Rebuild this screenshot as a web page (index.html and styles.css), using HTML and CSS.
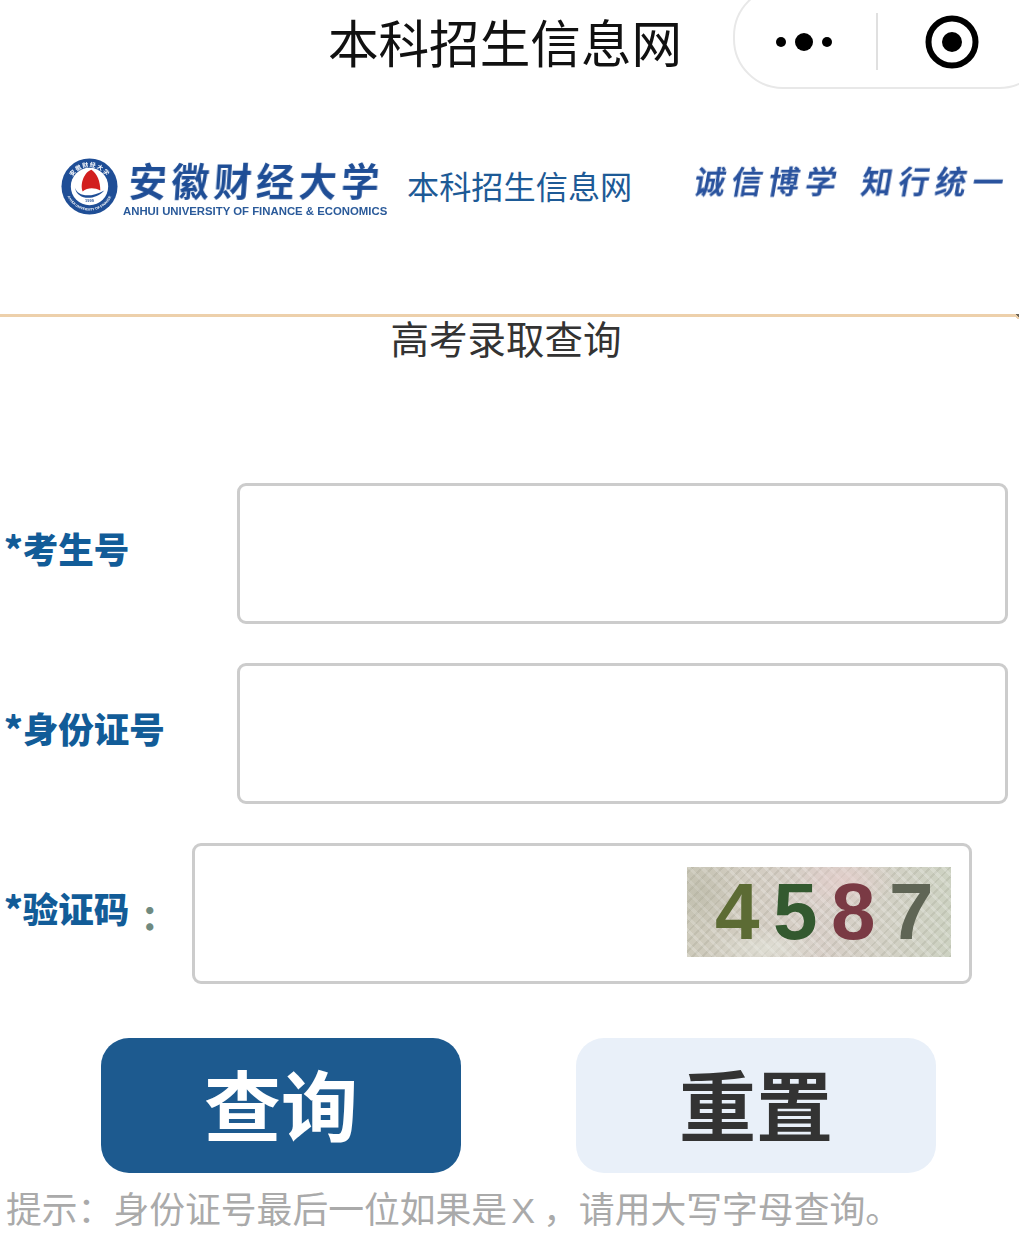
FILE: index.html
```html
<!DOCTYPE html>
<html lang="zh">
<head>
<meta charset="utf-8">
<title>本科招生信息网</title>
<link rel="stylesheet" href="styles.css">
</head>
<body>
<header class="nav">
  <h1 class="nav-title">本科招生信息网</h1>
  <div class="capsule">
    <div class="capsule-cell">
      <svg class="dots" width="62" height="20" viewBox="0 0 62 20"><circle cx="6" cy="10" r="5"/><circle cx="29" cy="10" r="9"/><circle cx="52" cy="10" r="5"/></svg>
    </div>
    <span class="capsule-sep"></span>
    <div class="capsule-cell">
      <svg width="54" height="54" viewBox="0 0 54 54"><circle cx="27" cy="27" r="23.5" fill="none" stroke="#000" stroke-width="6"/><circle cx="27" cy="27" r="10"/></svg>
    </div>
  </div>
</header>
<section class="banner">
  <svg class="seal" width="57" height="57" viewBox="0 0 58 58">
    <defs><path id="sealTop" d="M9 29a20 20 0 0 1 40 0"/><path id="sealBottom" d="M4.500 29a24.500 24.500 0 0 0 49 0"/></defs>
    <circle cx="29" cy="29" r="28.500" fill="#1f4e96"/>
    <circle cx="29" cy="29" r="19" fill="#fff"/>
    <path d="M31 12c6 4 9 12 9 21-6-3-13-3-18 1-3-8 2-20 9-22z" fill="#d21f1f"/>
    <path d="M14 30c3 9 15 11 30 3-9 10-27 11-30-3z" fill="#1f4e96"/>
    <text class="seal-year" x="29" y="45" text-anchor="middle">1999</text>
    <text class="seal-top"><textPath href="#sealTop" startOffset="50%" text-anchor="middle">安徽财经大学</textPath></text>
    <text class="seal-bottom"><textPath href="#sealBottom" startOffset="50%" text-anchor="middle">ANHUI UNIVERSITY OF FINANCE</textPath></text>
  </svg>
  <div class="brand">
    <div class="brand-cn">安徽财经大学</div>
    <div class="brand-en">ANHUI UNIVERSITY OF FINANCE &amp; ECONOMICS</div>
  </div>
  <div class="brand-site">本科招生信息网</div>
  <div class="motto"><span>诚信博学</span><span>知行统一</span></div>
</section>
<div class="rule"></div>
<h2 class="page-title">高考录取查询</h2>
<form class="form">
  <div class="row">
    <label class="label">*考生号</label>
    <div class="field"></div>
  </div>
  <div class="row">
    <label class="label">*身份证号</label>
    <div class="field"></div>
  </div>
  <div class="row">
    <label class="label label-captcha">*验证码<span class="colon">：</span></label>
    <div class="field field-captcha">
      <div class="captcha"><span class="d4">4</span><span class="d5">5</span><span class="d8">8</span><span class="d7">7</span></div>
    </div>
  </div>
  <div class="buttons">
    <div class="btn btn-primary">查询</div>
    <div class="btn btn-light">重置</div>
  </div>
</form>
<p class="hint">提示：身份证号最后一位如果是<span class="hint-x">X</span> ，请用大写字母查询。</p>
</body>
</html>
```
FILE: styles.css
```css
* { box-sizing: border-box; }
html, body { margin: 0; padding: 0; background: #fff; }
body { width: 1019px; height: 1259px; overflow: hidden; position: relative; font-family: "Noto Sans CJK SC", "Liberation Sans", sans-serif; }

.nav { height: 88px; padding-bottom: 6px; display: flex; justify-content: center; align-items: center; }
.nav-title { margin: 0 0 0 -9px; font-size: 50.600px; font-weight: 400; line-height: 82px; color: #111; }
.capsule { position: absolute; left: 733px; top: -14px; width: 316px; height: 103px; border: 2px solid #e8e8e8; border-radius: 50px; display: flex; align-items: center; padding-top: 8px; }
.capsule-cell { width: 141px; display: flex; justify-content: center; align-items: center; }
.capsule-cell:last-child { width: 147px; }
.dots { fill: #000; }
.capsule-sep { width: 2px; height: 57px; background: #e0e0e0; }

.banner { height: 226px; padding: 68px 0 0 61px; display: flex; align-items: flex-start; }
.seal { margin-top: 2px; flex: none; filter: blur(.3px); }
.seal-year { font: 700 4px "Liberation Sans", sans-serif; fill: #1f4e96; }
.seal-top { font: 700 6px "Noto Sans CJK SC", sans-serif; fill: #fff; letter-spacing: 1px; }
.seal-bottom { font: 700 3.500px "Liberation Sans", sans-serif; fill: #fff; }
.brand { margin-left: 5px; width: 264px; flex: none; }
.brand-cn { padding-left: 6px; height: 48px; font-size: 38px; letter-spacing: 4.500px; line-height: 48px; font-weight: 700; color: #1f4e96; white-space: nowrap; transform: skewX(-4deg); filter: blur(.3px); }
.brand-en { font: 700 11.370px/14px "Liberation Sans", sans-serif; color: #2a5a9a; white-space: nowrap; filter: blur(.3px); }
.brand-site { margin: 6px 0 0 20px; width: 225px; flex: none; font-size: 32.200px; line-height: 46px; color: #1d5a96; white-space: nowrap; }
.motto { margin: -1px 0 0 63px; display: flex; gap: 19px; font-size: 31px; letter-spacing: 6px; line-height: 50px; font-weight: 700; color: #2a539e; white-space: nowrap; transform: skewX(-10deg); filter: blur(.3px); }

.rule { height: 3px; background: #edd0ab; position: relative; }
.rule::after { content: ""; position: absolute; right: 0; top: 0; width: 6px; height: 5px; background: linear-gradient(225deg, #6b6355 0 35%, #edd0ab 36% 60%, transparent 61%); }
.page-title { margin: 0; text-align: center; font-size: 38.500px; font-weight: 400; line-height: 40px; color: #333; padding-right: 7px; }

.form { margin-top: 126px; }
.row { display: flex; height: 141px; margin-bottom: 39px; }
.label { padding: 42px 0 0 4px; width: 237px; flex: none; font-size: 35.500px; line-height: 46px; font-weight: 900; color: #125c98; }
.field { width: 771px; height: 141px; border: 3px solid #ccc; border-radius: 9px; background: #fff; }
.label-captcha { width: 192px; white-space: nowrap; }
.colon { display: inline-block; margin-left: 12px; color: #6f8a80; font-size: 34px; line-height: 20px; vertical-align: -7px; }
.field-captcha { width: 780px; padding: 21px 18px 0 0; display: flex; justify-content: flex-end; align-items: flex-start; }
.captcha {
  width: 264px; height: 90px; display: flex; gap: 16px; padding-left: 28px;
  font: 700 80px/90px "Liberation Sans", sans-serif;
  background-color: #cfd1c2;
  background-image:
    radial-gradient(ellipse 50px 30px at 60% 15%, rgba(235,205,205,.55), transparent),
    radial-gradient(ellipse 40px 40px at 5% 30%, rgba(170,170,150,.35), transparent),
    radial-gradient(ellipse 60px 20px at 30% 90%, rgba(235,240,230,.5), transparent),
    repeating-linear-gradient(45deg, rgba(255,255,255,.2) 0 3px, transparent 3px 9px),
    repeating-linear-gradient(-45deg, rgba(120,120,100,.14) 0 2px, transparent 2px 7px),
    linear-gradient(90deg, #cdcabb, #d8cfc8 50%, #cdd2c2);
  filter: blur(.7px);
}
.captcha span { width: 42px; }
.d4 { color: #5c6b34; }
.d5 { color: #33592f; }
.d8 { color: #7a3a44; }
.d7 { color: #5f6555; }

.buttons { display: flex; gap: 115px; padding-left: 101px; margin-top: 54px; }
.btn { width: 360px; height: 135px; border-radius: 28px; padding-bottom: 6px; display: flex; justify-content: center; align-items: center; font-size: 77px; font-weight: 700; }
.btn-primary { background: #1d5a8f; color: #fff; }
.btn-light { background: #e9f0f9; color: #333; }

.hint { margin: 11px 0 0 6px; font-size: 35.800px; line-height: 46px; color: #aaa; white-space: nowrap; }
.hint-x { margin-left: 4px; font-family: "Liberation Sans", sans-serif; }
```
